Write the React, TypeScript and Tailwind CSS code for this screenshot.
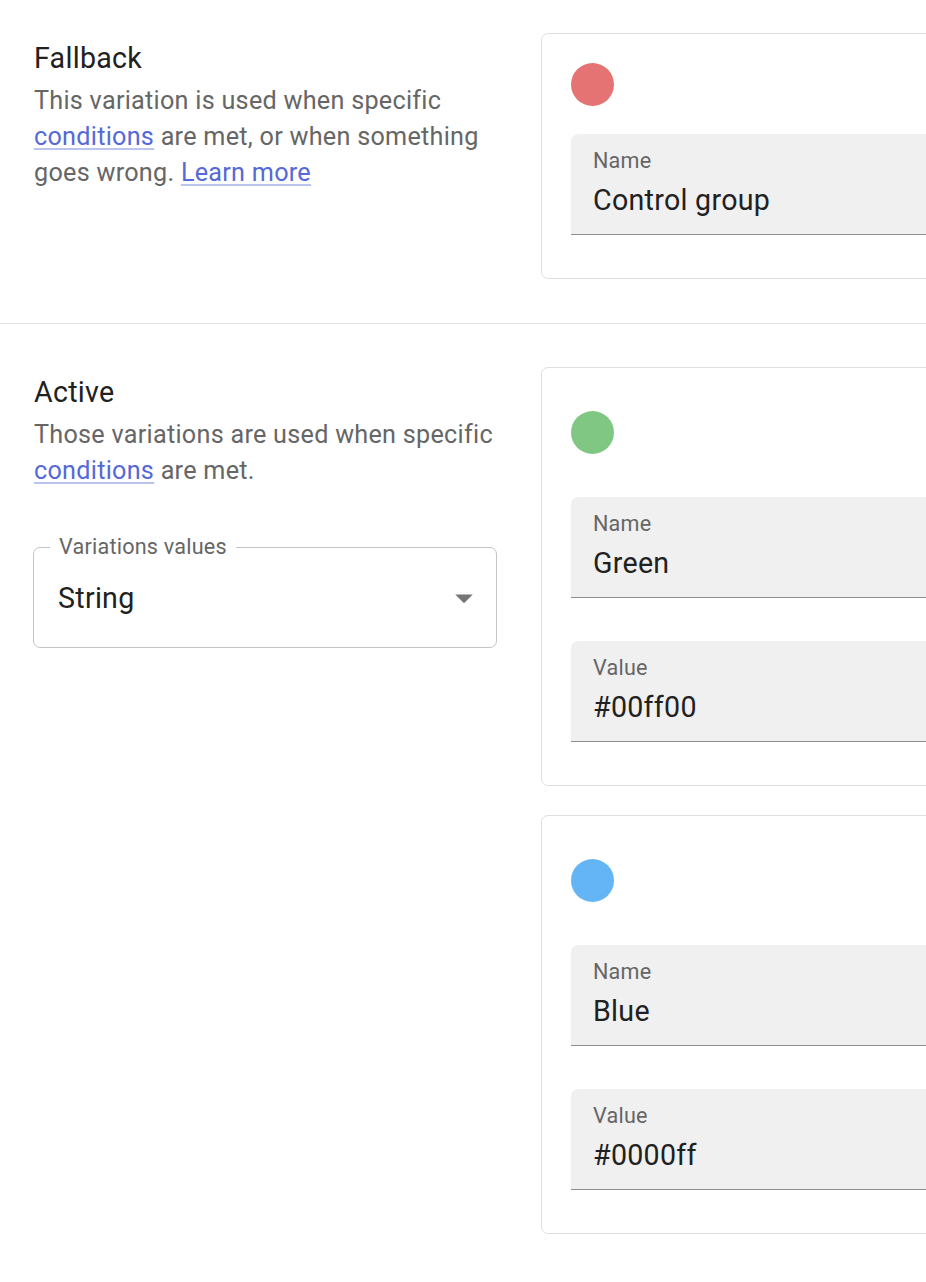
import React from "react";

type Variation = {
  color: string;
  name: string;
  value?: string;
};

const ACTIVE: Variation[] = [
  { color: "bg-[#81c784]", name: "Green", value: "#00ff00" },
  { color: "bg-[#64b5f6]", name: "Blue", value: "#0000ff" },
];

function Link({ children }: { children: React.ReactNode }) {
  return (
    <a
      href="#"
      className="text-[#5569d8] underline decoration-[#5569d8]/40 decoration-2 underline-offset-[3px]"
    >
      {children}
    </a>
  );
}

function Field({ label, value }: { label: string; value: string }) {
  return (
    <div className="flex h-[101px] flex-col rounded-t-[7px] border-b border-[#8e8e8e] bg-[#f0f0f0] pl-[22px]">
      <span className="pt-[16px] text-[21.6px] leading-[22px] tracking-[0.01em] text-[#666666]">
        {label}
      </span>
      <span className="mt-[10px] text-[28.6px] leading-[36px] tracking-[0.01em] text-[#212121]">
        {value}
      </span>
    </div>
  );
}

function Dot({ color }: { color: string }) {
  return <div className={`h-[43px] w-[43px] rounded-full ${color}`} />;
}

function SectionText({ title, children }: { title: string; children: React.ReactNode }) {
  return (
    <>
      <h2 className="text-[28.6px] leading-[50px] tracking-[0.01em] text-[#212121]">{title}</h2>
      <p className="text-[25.2px] leading-[36px] tracking-[0.0107em] text-[#666666]">{children}</p>
    </>
  );
}

function ValueTypeSelect() {
  return (
    <div className="relative mt-[58px] flex h-[101px] items-center justify-between rounded-[7px] border border-[#c4c4c4] pl-[24px] pr-[11px]">
      <span className="absolute left-[16px] top-[-12px] bg-white px-[9px] text-[21.6px] leading-[22px] tracking-[0.01em] text-[#666666]">
        Variations values
      </span>
      <span className="text-[28.6px] leading-[36px] tracking-[0.01em] text-[#212121]">String</span>
      <svg width="42" height="42" viewBox="0 0 24 24" className="fill-[#757575]">
        <path d="M7 10l5 5 5-5z" />
      </svg>
    </div>
  );
}

export default function App() {
  return (
    <div className="min-h-screen w-full overflow-hidden bg-white font-['Roboto',sans-serif]">
      {/* fallback */}
      <section className="flex gap-[44px] border-b border-[#e0e0e0] pb-[44px] pl-[33px] pt-[33px]">
        <div className="w-[464px] shrink-0 pl-px">
          <SectionText title="Fallback">
            This variation is used when specific <Link>conditions</Link> are met, or when
            something goes wrong. <Link>Learn more</Link>
          </SectionText>
        </div>
        <div className="w-[470px] shrink-0 rounded-[7px] border border-[#e0e0e0] px-[29px] pb-[43px] pt-[29px]">
          <Dot color="bg-[#e57373]" />
          <div className="mt-[28px]">
            <Field label="Name" value="Control group" />
          </div>
        </div>
      </section>

      {/* active */}
      <section className="flex gap-[44px] pb-[48px] pl-[33px] pt-[43px]">
        <div className="w-[464px] shrink-0">
          <div className="pl-px">
            <SectionText title="Active">
              Those variations are used when specific <Link>conditions</Link> are met.
            </SectionText>
          </div>
          <ValueTypeSelect />
        </div>
        <div className="flex w-[470px] shrink-0 flex-col gap-[29px]">
          {ACTIVE.map((v) => (
            <div
              key={v.name}
              className="rounded-[7px] border border-[#e0e0e0] px-[29px] pb-[43px] pt-[43px]"
            >
              <Dot color={v.color} />
              <div className="mt-[43px] flex flex-col gap-[43px]">
                <Field label="Name" value={v.name} />
                <Field label="Value" value={v.value ?? ""} />
              </div>
            </div>
          ))}
        </div>
      </section>
    </div>
  );
}
